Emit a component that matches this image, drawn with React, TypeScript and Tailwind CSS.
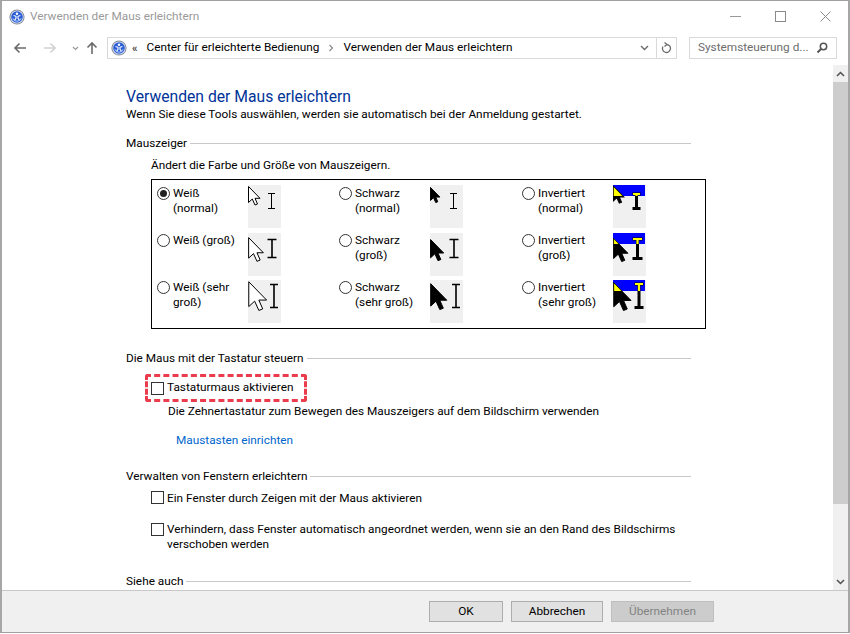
import React from "react";

const ARROW = "M0.5 0.5 L0.5 16.5 L4.3 13 L7 19 L9.5 18 L7 12.3 L12 12.3 Z";

function EaseIcon({ size = 16 }: { size?: number }) {
  return (
    <svg width={size} height={size} viewBox="0 0 16 16" className="shrink-0">
      <circle cx="8" cy="8" r="7.6" fill="#7f899d" />
      <circle cx="8" cy="8" r="6.6" fill="#dfe4ee" />
      <circle cx="8" cy="8" r="5.8" fill="#2c5fd6" />
      <circle cx="8" cy="4.7" r="1.2" fill="#fff" />
      <path d="M4.6 6.4 L7 7.3 L7 9.4 L5.6 11.4 M11.400 6.4 L9 7.3 L9 9.4 L10.4 11.4" stroke="#fff" strokeWidth="1.1" fill="none" />
      <path d="M3.8 9.2 A4.400 4.400 0 0 0 12.2 9.2" stroke="#bcd2ff" strokeWidth="0.9" fill="none" />
    </svg>
  );
}

type Beam = { x: number; w: number; y: number; h: number };
type Spec = { sc: number; ay: number; beam: Beam };
const SPECS: Record<"white" | "black" | "inv", Spec[]> = {
  white: [
    { sc: 1, ay: 1, beam: { x: 23.5, w: 7, y: 8, h: 16 } },
    { sc: 1.28, ay: 4, beam: { x: 24, w: 9, y: 6, h: 19 } },
    { sc: 1.55, ay: 1, beam: { x: 26, w: 8, y: 4, h: 24 } },
  ],
  black: [
    { sc: 0.82, ay: 2, beam: { x: 23.5, w: 7, y: 8, h: 16 } },
    { sc: 1.14, ay: 6, beam: { x: 24, w: 9, y: 6, h: 19 } },
    { sc: 1.4, ay: 3, beam: { x: 26, w: 8, y: 4, h: 24 } },
  ],
  inv: [
    { sc: 0.9, ay: 1, beam: { x: 23.5, w: 8, y: 8, h: 17 } },
    { sc: 1.24, ay: 5, beam: { x: 24.5, w: 10, y: 5, h: 22 } },
    { sc: 1.5, ay: 2, beam: { x: 26, w: 9, y: 3, h: 26 } },
  ],
};

function ThinBeam({ b, sw }: { b: Beam; sw: number }) {
  const l = b.x - b.w / 2, r = b.x + b.w / 2, t = b.y, e = b.y + b.h;
  return <path d={`M${l} ${t + 0.5} H${r} M${b.x} ${t} V${e} M${l} ${e - 0.5} H${r}`} stroke="#000" strokeWidth={sw} fill="none" />;
}

function InvBeam({ b, id }: { b: Beam; id: string }) {
  const l = b.x - b.w / 2, r = b.x + b.w / 2, t = b.y, e = b.y + b.h;
  return (
    <>
      <path d={`M${b.x} ${t} V${e} M${l} ${e - 1.5} H${r} M${l} ${t + 1} H${r}`} stroke="#000" strokeWidth="3" fill="none" />
      <g clipPath={`url(#${id})`}>
        <path d={`M${b.x} ${t} V${e} M${l + 0.5} ${t + 1} H${r - 0.5}`} stroke="#ffff00" strokeWidth="2.2" fill="none" />
      </g>
    </>
  );
}

function Preview({ kind, size }: { kind: "white" | "black" | "inv"; size: number }) {
  const s = SPECS[kind][size];
  const tf = `translate(0 ${s.ay}) scale(${s.sc})`;
  const id = `clip${size}`;
  return (
    <svg width="33" height="43" viewBox="0 0 33 43" className="block shrink-0 bg-[#f0f0f0]">
      {kind === "inv" ? (
        <>
          <rect x="0" y="0" width="32" height="11" fill="#0000ff" />
          <clipPath id={id}>
            <rect x="0" y="0" width="33" height="11" />
          </clipPath>
          <path d={ARROW} transform={tf} fill="#000" stroke="#000" strokeWidth={1 / s.sc} />
          <g clipPath={`url(#${id})`}>
            <path d={ARROW} transform={tf} fill="#ffff00" stroke="#000" strokeWidth={0.6 / s.sc} />
          </g>
          <InvBeam b={s.beam} id={id} />
        </>
      ) : (
        <>
          <path d={ARROW} transform={tf} fill={kind === "white" ? "#fff" : "#000"} stroke="#000" strokeWidth={1 / s.sc} />
          <ThinBeam b={s.beam} sw={size === 0 ? 1 : 1.6} />
        </>
      )}
    </svg>
  );
}

function Radio({ checked }: { checked?: boolean }) {
  return (
    <span className="mt-[1px] flex h-[13px] w-[13px] shrink-0 items-center justify-center rounded-full border border-[#333] bg-white">
      {checked && <span className="block h-[7px] w-[7px] rounded-full bg-[#222]" />}
    </span>
  );
}

function Option({ l1, l2, kind, size, checked }: { l1: string; l2?: string; kind: "white" | "black" | "inv"; size: number; checked?: boolean }) {
  return (
    <div className="flex items-start">
      <div className={`flex w-[91px] shrink-0 items-start gap-[3px] ${size === 0 ? "pt-[1px]" : ""}`}>
        <Radio checked={checked} />
        <div className="leading-[15px]">
          {l1}
          {l2 && <br />}
          {l2}
        </div>
      </div>
      <Preview kind={kind} size={size} />
    </div>
  );
}

function Section({ title }: { title: string }) {
  return (
    <div className="flex items-center gap-[3px] leading-[16px]">
      <span>{title}</span>
      <span className="h-px flex-1 bg-[#c8c8c8]" />
    </div>
  );
}

function Check() {
  return <span className="mt-px block h-[13px] w-[13px] shrink-0 border border-[#333] bg-white" />;
}

function Btn({ children, w, disabled }: { children: React.ReactNode; w: string; disabled?: boolean }) {
  return (
    <div className={`flex h-[21px] items-center justify-center border ${w} ${disabled ? "border-[#bfbfbf] bg-[#cccccc] text-[#838383]" : "border-[#adadad] bg-[#e1e1e1] text-black"}`}>
      {children}
    </div>
  );
}

export default function App() {
  return (
    <div className="h-[634px] w-[850px] overflow-hidden bg-white font-['Roboto','Noto_Sans',sans-serif] text-[11.8px] text-black">
      <div className="flex h-[633px] flex-col border-x-2 border-y border-x-[#a6a6a6] border-y-[#a0a0a0] bg-white">
        {/* title bar */}
        <div className="flex h-[30px] shrink-0 items-center pl-[7px] pt-[1px] text-[#9a9a9a]">
          <EaseIcon />
          <span className="ml-[5px] flex-1">Verwenden der Maus erleichtern</span>
          <div className="flex items-center gap-[34px] pr-[17px]">
            <svg width="11" height="11" viewBox="0 0 11 11"><path d="M0 5.5H11" stroke="#9a9a9a" /></svg>
            <svg width="11" height="11" viewBox="0 0 11 11"><rect x="0.5" y="0.5" width="10" height="10" fill="none" stroke="#8a8a8a" /></svg>
            <svg width="11" height="11" viewBox="0 0 11 11"><path d="M0.5 0.5L10.5 10.5M10.5 0.5L0.5 10.5" stroke="#8a8a8a" /></svg>
          </div>
        </div>
        {/* address row */}
        <div className="flex h-[34px] shrink-0 items-start pt-[6px]">
          <div className="flex h-[22px] w-[105px] shrink-0 items-center pl-[11px]">
            <svg width="14" height="12" viewBox="0 0 14 12"><path d="M13 6H2M6.5 1.5L2 6l4.5 4.5" stroke="#6b6b6b" strokeWidth="1.6" fill="none" /></svg>
            <svg className="ml-[16px]" width="14" height="12" viewBox="0 0 14 12"><path d="M1 6h11M7.5 1.5L12 6l-4.5 4.5" stroke="#d2d2d2" strokeWidth="1.6" fill="none" /></svg>
            <svg className="ml-[15px]" width="7" height="5" viewBox="0 0 7 5"><path d="M1 1l2.5 2.5L6 1" stroke="#9a9a9a" strokeWidth="1.2" fill="none" /></svg>
            <svg className="ml-[7px]" width="12" height="14" viewBox="0 0 12 14"><path d="M6 13V2M1.5 6.5L6 2l4.500 4.500" stroke="#6b6b6b" strokeWidth="1.6" fill="none" /></svg>
          </div>
          <div className="flex h-[22px] w-[570px] shrink-0 items-center border border-[#d9d9d9] pl-[3px]">
            <EaseIcon />
            <span className="ml-[5px] text-[11px] font-bold leading-none text-[#444]">«</span>
            <span className="ml-[9px]">Center für erleichterte Bedienung</span>
            <svg className="mx-[9px]" width="6" height="8" viewBox="0 0 6 8"><path d="M1.500 1l3 3-3 3" stroke="#8a8a8a" strokeWidth="1.2" fill="none" /></svg>
            <span className="flex-1">Verwenden der Maus erleichtern</span>
            <svg className="mr-[7px]" width="9" height="6" viewBox="0 0 9 6"><path d="M1 1l3.500 3.500L8 1" stroke="#6b6b6b" strokeWidth="1.400" fill="none" /></svg>
            <div className="flex h-full w-[20px] items-center justify-center border-l border-[#d9d9d9]">
              <svg width="11" height="12" viewBox="0 0 11 12"><path d="M5.500 2.500A4 4 0 1 1 2 4.500M3.500 0.500l2.500 2-2.500 2" stroke="#6b6b6b" strokeWidth="1.300" fill="none" /></svg>
            </div>
          </div>
          <div className="ml-[12px] flex h-[22px] w-[148px] shrink-0 items-center justify-between border border-[#d9d9d9] pl-[8px] pr-[8px] text-[#6d6d6d]">
            <span className="whitespace-nowrap">Systemsteuerung d...</span>
            <svg width="12" height="12" viewBox="0 0 12 12"><circle cx="7.500" cy="4.500" r="3.200" stroke="#555" strokeWidth="1.500" fill="none" /><path d="M5 7L1.500 10.500" stroke="#555" strokeWidth="2" /></svg>
          </div>
        </div>
        {/* main */}
        <div className="flex min-h-0 flex-1">
          <div className="min-w-0 flex-1 overflow-hidden pl-[124px] pr-[142px] pt-[22px]">
            <div className="text-[15.7px] leading-[19px] text-[#003399]">Verwenden der Maus erleichtern</div>
            <div className="leading-[16px]">Wenn Sie diese Tools auswählen, werden sie automatisch bei der Anmeldung gestartet.</div>
            <div className="mt-[13px]"><Section title="Mauszeiger" /></div>
            <div className="ml-[25px] mt-[6px] leading-[16px]">Ändert die Farbe und Größe von Mauszeigern.</div>
            <div className="ml-[25px] mr-[-15px] mt-[6px] grid h-[150px] grid-cols-[182px_183px_1fr] content-start gap-y-[4.500px] border border-black pl-[5px] pt-[5px]">
              <Option l1="Weiß" l2="(normal)" kind="white" size={0} checked />
              <Option l1="Schwarz" l2="(normal)" kind="black" size={0} />
              <Option l1="Invertiert" l2="(normal)" kind="inv" size={0} />
              <Option l1="Weiß (groß)" kind="white" size={1} />
              <Option l1="Schwarz" l2="(groß)" kind="black" size={1} />
              <Option l1="Invertiert" l2="(groß)" kind="inv" size={1} />
              <Option l1="Weiß (sehr" l2="groß)" kind="white" size={2} />
              <Option l1="Schwarz" l2="(sehr groß)" kind="black" size={2} />
              <Option l1="Invertiert" l2="(sehr groß)" kind="inv" size={2} />
            </div>
            <div className="mt-[21px]"><Section title="Die Maus mit der Tastatur steuern" /></div>
            <div className="ml-[19px] mt-[8px] flex h-[28px] w-[162px] items-center gap-[3px] rounded-[3px] border-[3px] border-dashed border-[#ea3c4c] pl-[3px]">
              <Check />
              <span>Tastaturmaus aktivieren</span>
            </div>
            <div className="ml-[42px] mt-[1px] leading-[16px] whitespace-nowrap">Die Zehnertastatur zum Bewegen des Mauszeigers auf dem Bildschirm verwenden</div>
            <div className="ml-[50px] mt-[13px] leading-[16px] text-[#0066cc]">Maustasten einrichten</div>
            <div className="mt-[20px]"><Section title="Verwalten von Fenstern erleichtern" /></div>
            <div className="ml-[25px] mt-[6px] flex gap-[3px] leading-[16px]">
              <Check />
              <span>Ein Fenster durch Zeigen mit der Maus aktivieren</span>
            </div>
            <div className="ml-[25px] mt-[16px] flex gap-[3px] leading-[15px] whitespace-nowrap">
              <Check />
              <span>
                Verhindern, dass Fenster automatisch angeordnet werden, wenn sie an den Rand des Bildschirms
                <br />
                verschoben werden
              </span>
            </div>
            <div className="mt-[21px]"><Section title="Siehe auch" /></div>
          </div>
          {/* scrollbar */}
          <div className="flex w-[15px] shrink-0 flex-col bg-[#f0f0f0]">
            <div className="flex h-[17px] shrink-0 items-center justify-center">
              <svg width="9" height="6" viewBox="0 0 9 6"><path d="M1 5l3.500-3.500L8 5" stroke="#505050" strokeWidth="1.500" fill="none" /></svg>
            </div>
            <div className="h-[422px] shrink-0 bg-[#cdcdcd]" />
            <div className="flex-1" />
            <div className="flex h-[17px] shrink-0 items-center justify-center">
              <svg width="9" height="6" viewBox="0 0 9 6"><path d="M1 1l3.500 3.500L8 1" stroke="#505050" strokeWidth="1.500" fill="none" /></svg>
            </div>
          </div>
        </div>
        {/* footer */}
        <div className="flex h-[42px] shrink-0 items-start justify-end gap-[8px] border-t border-[#c8c8c8] bg-[#f0f0f0] pr-[134px] pt-[10px]">
          <Btn w="w-[74px]">OK</Btn>
          <Btn w="w-[92px]">Abbrechen</Btn>
          <Btn w="w-[103px]" disabled>Übernehmen</Btn>
        </div>
      </div>
    </div>
  );
}
